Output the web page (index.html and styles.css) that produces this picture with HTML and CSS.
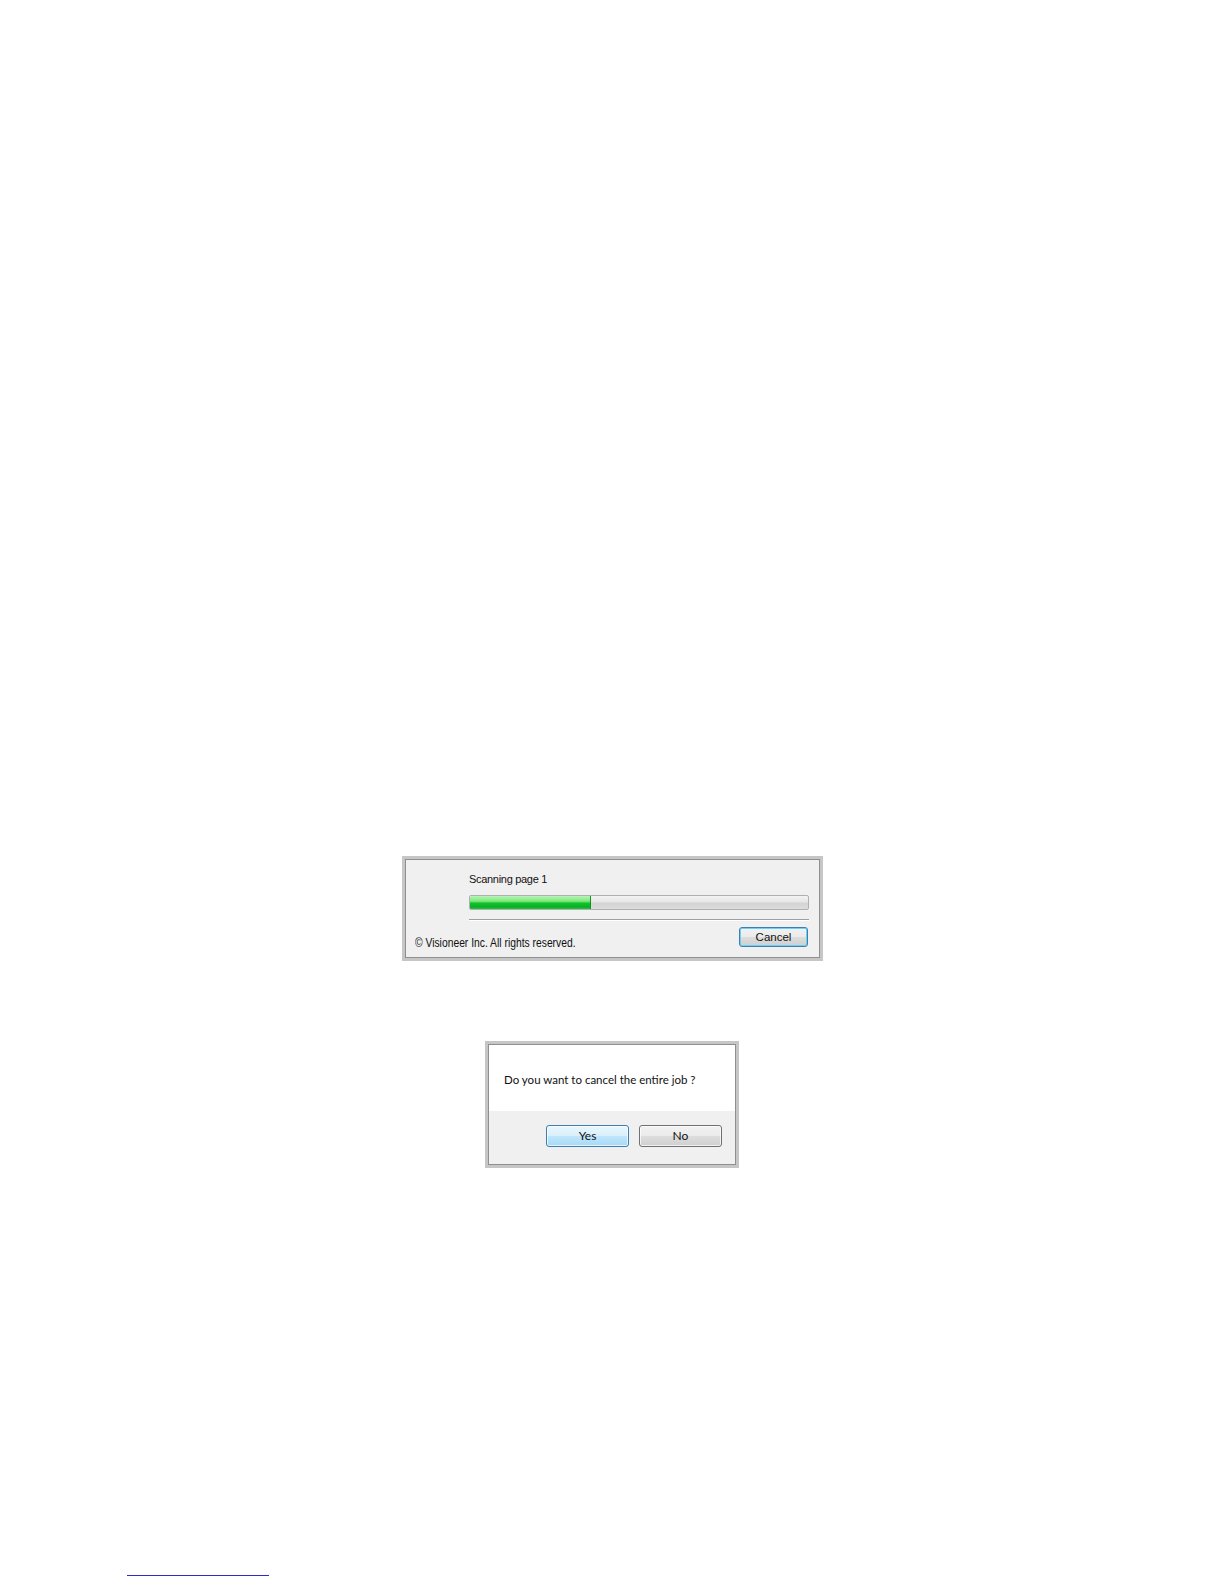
FILE: index.html
```html
<!DOCTYPE html>
<html>
<head>
<meta charset="utf-8">
<link rel="stylesheet" href="styles.css">
</head>
<body>
<div class="page">
  <div class="dialog scan">
    <div class="dialog-inner scan-inner">
      <div class="scan-main">
        <div class="scan-label">Scanning page 1</div>
        <div class="progress"><div class="progress-fill" style="width:121px"></div></div>
        <div class="sep"></div>
      </div>
      <div class="scan-footer">
        <div class="copyright"><span class="copyright-text">© Visioneer Inc. All rights reserved.</span></div>
        <button class="btn btn-default btn-cancel">Cancel</button>
      </div>
    </div>
  </div>

  <div class="dialog confirm">
    <div class="dialog-inner confirm-inner">
      <div class="confirm-msg">Do you want to cancel the entire job ?</div>
      <div class="confirm-buttons">
        <button class="btn btn-hot btn-wide">Yes</button>
        <button class="btn btn-wide">No</button>
      </div>
    </div>
  </div>

  <div class="footer-rule"></div>
</div>
</body>
</html>
```

FILE: styles.css
```css
html, body {
  margin: 0;
  padding: 0;
  background: #ffffff;
}

.page {
  width: 1224px;
  height: 1584px;
  box-sizing: border-box;
  padding-top: 856px;
  display: flex;
  flex-direction: column;
  align-items: flex-start;
  overflow: hidden;
}

.dialog {
  box-sizing: border-box;
  border: 3px solid #c6c6c6;
  background: #c6c6c6;
}

.dialog-inner {
  box-sizing: border-box;
  height: 100%;
  border: 1px solid #8f8f8f;
}

/* Scanning dialog */
.scan {
  width: 421px;
  height: 105px;
  margin-left: 402px;
}

.scan-inner {
  background: #f0f0f0;
  padding-top: 13px;
  display: flex;
  flex-direction: column;
}

.scan-main {
  margin-left: 63px;
  margin-right: 10px;
  display: flex;
  flex-direction: column;
}

.scan-label {
  font-family: "Liberation Sans", Arial, sans-serif;
  font-size: 11px;
  line-height: 13px;
  letter-spacing: -0.3px;
  color: #111;
}

.progress {
  margin-top: 9px;
  height: 15px;
  box-sizing: border-box;
  border: 1px solid #b0b0b0;
  border-radius: 2px;
  background: linear-gradient(to bottom, #f3f3f3 0%, #e6e6e6 45%, #d4d4d4 55%, #dcdcdc 100%);
  overflow: hidden;
}

.progress-fill {
  height: 100%;
  background: linear-gradient(to bottom, #b7f5b7 0%, #7ee87e 40%, #12c12c 55%, #06b025 85%, #2bc23f 100%);
  border-right: 1px solid #0a9a20;
  box-sizing: border-box;
}

.sep {
  margin-top: 9px;
  height: 1px;
  background: #a0a0a0;
  border-bottom: 1px solid #ffffff;
}

.scan-footer {
  margin-top: 6px;
  padding-left: 9px;
  padding-right: 11px;
  display: flex;
  justify-content: space-between;
  align-items: flex-start;
}

.copyright {
  margin-top: 9px;
  width: 160px;
  white-space: nowrap;
  font-family: "Liberation Sans", Arial, sans-serif;
  font-size: 12px;
  line-height: 14px;
  color: #111;
}

.copyright-text {
  display: inline-block;
  transform: scaleX(0.86);
  transform-origin: left center;
}

.btn {
  box-sizing: border-box;
  font-family: "Liberation Sans", Arial, sans-serif;
  font-size: 11px;
  color: #111;
  padding: 0;
  margin: 0;
  border: 1px solid #707070;
  border-radius: 3px;
  background: linear-gradient(to bottom, #f2f2f2 0%, #ebebeb 48%, #dddddd 52%, #cfcfcf 100%);
  box-shadow: inset 0 0 0 1px rgba(255, 255, 255, 0.7);
}

.btn-default {
  border-color: #3c7fb1;
  box-shadow: inset 0 0 0 1px #6fd0f5;
}

.btn-cancel {
  width: 69px;
  height: 20px;
  line-height: 16px;
  font-size: 11.5px;
}

/* Confirm dialog */
.confirm {
  width: 254px;
  height: 127px;
  margin-top: 80px;
  margin-left: 485px;
}

.confirm-inner {
  background: #ffffff;
  display: flex;
  flex-direction: column;
}

.confirm-msg {
  height: 66px;
  box-sizing: border-box;
  padding-top: 28px;
  padding-left: 15px;
  font-family: Lato, "Liberation Sans", sans-serif;
  font-size: 11.5px;
  line-height: 14px;
  color: #111;
}

.confirm-buttons {
  flex: 1;
  background: #f0f0f0;
  padding-top: 14px;
  padding-right: 13px;
  display: flex;
  justify-content: flex-end;
  align-items: flex-start;
  gap: 10px;
}

.btn-wide {
  width: 83px;
  height: 22px;
  line-height: 18px;
  font-family: Lato, "Liberation Sans", sans-serif;
  font-size: 12px;
}

.btn-hot {
  border-color: #3c7fb1;
  background: linear-gradient(to bottom, #eaf6fd 0%, #d9f0fc 48%, #bee6fd 52%, #a7d9f5 100%);
}

.footer-rule {
  margin-top: 407px;
  margin-left: 127px;
  width: 142px;
  height: 1px;
  background: #2b2bd0;
}
```
